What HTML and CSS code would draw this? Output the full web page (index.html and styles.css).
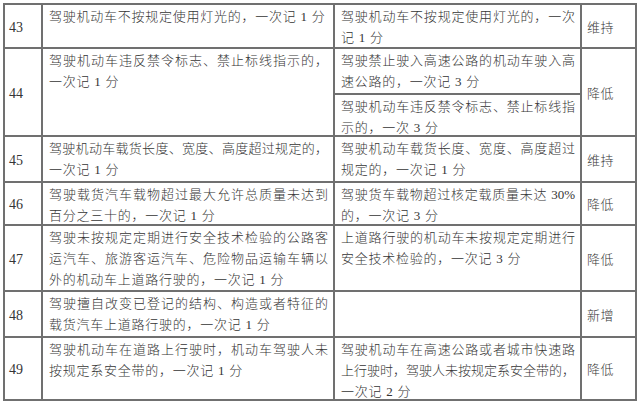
FILE: index.html
```
<!DOCTYPE html>
<html lang="zh-CN">
<head>
<meta charset="utf-8">
<link rel="stylesheet" href="styles.css">
</head>
<body>
<table class="rules">
  <colgroup>
    <col class="c-no"><col class="c-old"><col class="c-new"><col class="c-chg">
  </colgroup>
  <tbody>
    <tr class="h44">
      <td class="no">43</td>
      <td class="tx"><div class="cell">驾驶机动车不按规定使用灯光的，一次记 1 分</div></td>
      <td class="tx"><div class="cell"><span class="j">驾驶机动车不按规定使用灯光的，一次</span>记 1 分</div></td>
      <td class="chg">维持</td>
    </tr>
    <tr class="h46">
      <td class="no" rowspan="2">44</td>
      <td class="tx" rowspan="2"><div class="cell"><span class="j">驾驶机动车违反禁令标志、禁止标线指示的，</span>一次记 1 分</div></td>
      <td class="tx"><div class="cell"><span class="j">驾驶禁止驶入高速公路的机动车驶入高</span>速公路的，一次记 3 分</div></td>
      <td class="chg" rowspan="2">降低</td>
    </tr>
    <tr class="h42">
      <td class="tx"><div class="cell"><span class="j">驾驶机动车违反禁令标志、禁止标线指</span>示的，一次 3 分</div></td>
    </tr>
    <tr class="h46">
      <td class="no">45</td>
      <td class="tx"><div class="cell"><span class="j">驾驶机动车载货长度、宽度、高度超过规定的，</span>一次记 1 分</div></td>
      <td class="tx"><div class="cell"><span class="j">驾驶机动车载货长度、宽度、高度超过</span>规定的，一次记 1 分</div></td>
      <td class="chg">维持</td>
    </tr>
    <tr class="h43">
      <td class="no">46</td>
      <td class="tx"><div class="cell"><span class="j">驾驶载货汽车载物超过最大允许总质量未达到</span>百分之三十的，一次记 1 分</div></td>
      <td class="tx"><div class="cell"><span class="j">驾驶货车载物超过核定载质量未达 30%</span>的，一次记 3 分</div></td>
      <td class="chg">降低</td>
    </tr>
    <tr class="h66">
      <td class="no">47</td>
      <td class="tx"><div class="cell"><span class="j">驾驶未按规定定期进行安全技术检验的公路客</span><span class="j">运汽车、旅游客运汽车、危险物品运输车辆以</span>外的机动车上道路行驶的，一次记 1 分</div></td>
      <td class="tx"><div class="cell"><span class="j">上道路行驶的机动车未按规定定期进行</span>安全技术检验的，一次记 3 分</div></td>
      <td class="chg">降低</td>
    </tr>
    <tr class="h46">
      <td class="no">48</td>
      <td class="tx"><div class="cell"><span class="j">驾驶擅自改变已登记的结构、构造或者特征的</span>载货汽车上道路行驶的，一次记 1 分</div></td>
      <td class="tx"><div class="cell"></div></td>
      <td class="chg">新增</td>
    </tr>
    <tr class="h63">
      <td class="no">49</td>
      <td class="tx"><div class="cell"><span class="j">驾驶机动车在道路上行驶时，机动车驾驶人未</span>按规定系安全带的，一次记 1 分</div></td>
      <td class="tx"><div class="cell"><span class="j">驾驶机动车在高速公路或者城市快速路</span><span class="j">上行驶时，驾驶人未按规定系安全带的，</span>一次记 2 分</div></td>
      <td class="chg">降低</td>
    </tr>
  </tbody>
</table>
</body>
</html>
```
FILE: styles.css
```
html, body {
  margin: 0;
  padding: 0;
  background: #ffffff;
}

body {
  font-family: "Liberation Serif", "Noto Sans CJK SC", serif;
  color: #353535;
}

.rules {
  border-collapse: collapse;
  table-layout: fixed;
  width: 634px;
  margin: 3px 0 0 3px;
}

.rules td {
  border: 2px solid #707070;
  padding: 0;
  height: 1px;
}

.c-no { width: 38px; }
.c-old { width: 292px; }
.c-new { width: 247px; }
.c-chg { width: 55px; }

.cell {
  overflow: visible;
}

.h42 .cell { height: 39px; }
.h43 .cell { height: 40px; }
.h44 .cell { height: 41px; }
.h46 .cell { height: 43px; }
.h63 .cell { height: 60px; }
.h66 .cell { height: 63px; }

.no {
  font-size: 14px;
  vertical-align: middle;
  padding-left: 4px !important;
  padding-top: 3px !important;
}

.tx {
  vertical-align: top;
  font-size: 13px;
  font-weight: 300;
  line-height: 21px;
  letter-spacing: 0.75px;
  white-space: nowrap;
  padding: 1px 5px 0 6px !important;
}

.j {
  display: block;
  text-align: justify;
  text-align-last: justify;
  letter-spacing: 0;
}

.chg {
  vertical-align: middle;
  font-size: 13px;
  font-weight: 300;
  letter-spacing: 0.4px;
  padding-left: 5px !important;
}
```
